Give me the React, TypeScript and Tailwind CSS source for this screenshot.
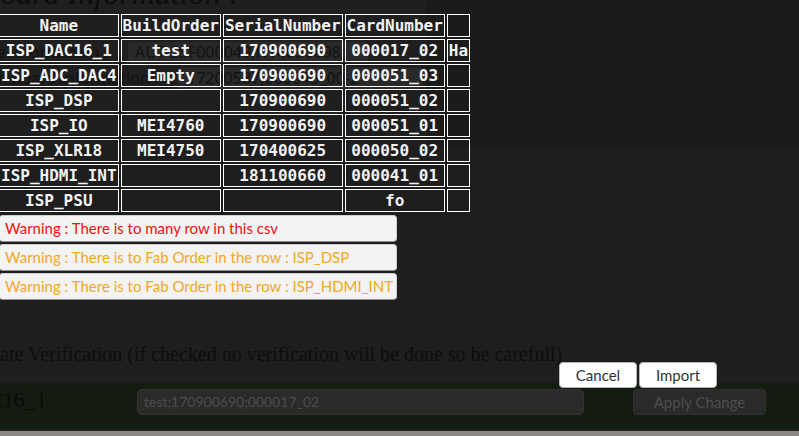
import React from 'react';

type Row = { name: string; build: string; serial: string; card: string; extra: string };

const rows: Row[] = [
    { name: 'ISP_DAC16_1', build: 'test', serial: '170900690', card: '000017_02', extra: 'Ha' },
    { name: 'ISP_ADC_DAC4', build: 'Empty', serial: '170900690', card: '000051_03', extra: '' },
    { name: 'ISP_DSP', build: '', serial: '170900690', card: '000051_02', extra: '' },
    { name: 'ISP_IO', build: 'MEI4760', serial: '170900690', card: '000051_01', extra: '' },
    { name: 'ISP_XLR18', build: 'MEI4750', serial: '170400625', card: '000050_02', extra: '' },
    { name: 'ISP_HDMI_INT', build: '', serial: '181100660', card: '000041_01', extra: '' },
    { name: 'ISP_PSU', build: '', serial: '', card: 'fo', extra: '' },
];

const warnings = [
    { text: 'Warning : There is to many row in this csv', color: 'text-[#f01010]' },
    { text: 'Warning : There is to Fab Order in the row : ISP_DSP', color: 'text-[#f5a623]' },
    { text: 'Warning : There is to Fab Order in the row : ISP_HDMI_INT', color: 'text-[#f5a623]' },
];

const cell = 'border border-white px-[1px] py-[1px] leading-[19px] text-center whitespace-nowrap';

export default function App() {
    return (
        <div className="relative w-[799px] h-[436px] overflow-hidden bg-[#1f1e1e]">
            {/* page behind the import dialog */}
            <div className="flex flex-col h-full">
                <div className="flex h-[147px]">
                    <div className="w-[426px] bg-[#1f1f1f] flex flex-col">
                        <h2 className="ml-[-19px] mt-[-25px] text-[32px] leading-[36px] italic text-[#0c0c0c] whitespace-nowrap" style={{ fontFamily: '"Liberation Serif", serif' }}>
                            Board Information :
                        </h2>
                        <div className="mt-[29px] flex items-center text-[16px] text-[#121212] whitespace-nowrap" style={{ fontFamily: '"Noto Sans", sans-serif' }}>
                            <span className="ml-[-30px] w-[158px]">Base information :</span>
                            <span className="w-[240px] h-[21px] rounded-[4px] bg-[#292929] px-[7px] leading-[21px] overflow-hidden">AUT-SSF000049;N14036698;</span>
                        </div>
                        <div className="mt-[2px] flex items-center text-[16px] text-[#121212] whitespace-nowrap" style={{ fontFamily: '"Noto Sans", sans-serif' }}>
                            <span className="ml-[-30px] w-[208px]">Main board information :</span>
                            <span className="w-[244px] h-[22px] rounded-[4px] bg-[#292929] px-[9px] leading-[22px] overflow-hidden">17200587;000043_00-2</span>
                        </div>
                    </div>
                    <div className="flex-1 bg-[#1b1b1b]" />
                </div>
                <div className="flex-1 flex flex-col justify-end pb-[17px]">
                    <p className="text-[20px] leading-[24px] text-[#0d0d0d] whitespace-nowrap" style={{ fontFamily: '"Liberation Serif", serif' }}>
                        ate Verification (if checked no verification will be done so be carefull)
                    </p>
                </div>
                <div className="h-[47px] bg-[#141c10] flex items-start pt-[4px]">
                    <div className="w-[137px] overflow-hidden">
                        <span className="block ml-[-12px] text-[22px] leading-[26px] text-[#0a0a0a] whitespace-nowrap" style={{ fontFamily: '"Liberation Serif", serif' }}>C16_1</span>
                    </div>
                    <div className="mt-[2px] w-[447px] h-[26px] rounded-[5px] bg-[#2b2b2a] border border-[#333332] px-[6px] text-[14px] leading-[24px] text-[#4c4c4c]" style={{ fontFamily: 'Lato, sans-serif' }}>
                        test;170900690;000017_02
                    </div>
                    <div className="mt-[2px] ml-[49px] w-[133px] h-[26px] rounded-[4px] bg-[#2a2a2a] border border-[#303030] text-center text-[15px] leading-[24px] text-[#4e4e4e]" style={{ fontFamily: 'Lato, sans-serif' }}>
                        Apply Change
                    </div>
                </div>
                <div className="h-[1px] bg-[#2a2826]" />
                <div className="h-[5px] bg-[#8b8782]" />
            </div>

            {/* import dialog */}
            <div className="absolute inset-0 flex flex-col">
                <table className="mt-[12px] ml-[-3px] border-separate border-spacing-[2px] text-[16px] font-bold text-[#f2f2f2] self-start" style={{ fontFamily: '"DejaVu Sans Mono", monospace' }}>
                    <thead>
                        <tr>
                            <th className={cell}>Name</th>
                            <th className={cell}>BuildOrder</th>
                            <th className={cell}>SerialNumber</th>
                            <th className={cell}>CardNumber</th>
                            <th className={cell}></th>
                        </tr>
                    </thead>
                    <tbody>
                        {rows.map((r) => (
                            <tr key={r.name}>
                                <td className={cell}>{r.name}</td>
                                <td className={cell}>{r.build}</td>
                                <td className={cell}>{r.serial}</td>
                                <td className={cell}>{r.card}</td>
                                <td className={cell}>{r.extra}</td>
                            </tr>
                        ))}
                    </tbody>
                </table>

                <div className="mt-[1px] ml-[-1px] w-[398px] flex flex-col gap-[2px]" style={{ fontFamily: 'Lato, sans-serif' }}>
                    {warnings.map((w) => (
                        <div key={w.text} className={`h-[27px] rounded-[4px] bg-[#f3f3f3] border border-[#cfcfcf] border-b-[#8f8f8f] px-[5px] text-[15px] leading-[25px] whitespace-nowrap ${w.color}`}>
                            {w.text}
                        </div>
                    ))}
                </div>

                <div className="mt-[62px] ml-[559px] flex gap-[2px]" style={{ fontFamily: 'Lato, sans-serif' }}>
                    <button className="w-[78px] h-[26px] rounded-[4px] bg-white border border-[#b8b8b8] text-[15px] text-[#333]">Cancel</button>
                    <button className="w-[78px] h-[26px] rounded-[4px] bg-white border border-[#b8b8b8] text-[15px] text-[#333]">Import</button>
                </div>
            </div>
        </div>
    );
}
